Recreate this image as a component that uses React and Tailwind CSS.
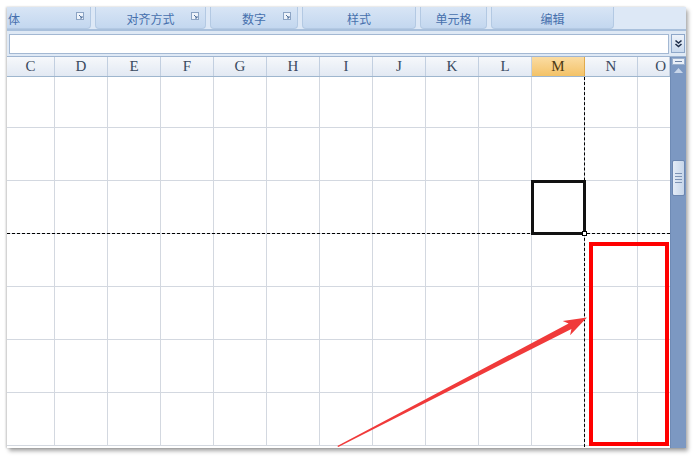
import React from "react"

const cols = ["C", "D", "E", "F", "G", "H", "I", "J", "K", "L", "M", "N", "O"]
const widths = [48, 53, 53, 53, 53, 53, 53, 53, 53, 53, 53, 53, 32]
const rows = [51, 53, 53, 53, 53, 53, 53]

const tabs = [
  { label: "体", w: "w-[84px]", launcher: true, align: "justify-between pl-[1px]" },
  { label: "对齐方式", w: "w-[111px]", launcher: true, align: "justify-center" },
  { label: "数字", w: "w-[88px]", launcher: true, align: "justify-center" },
  { label: "样式", w: "w-[114px]", launcher: false, align: "justify-center" },
  { label: "单元格", w: "w-[67px]", launcher: false, align: "justify-center" },
  { label: "编辑", w: "w-[123px]", launcher: false, align: "justify-center" },
]

function Launcher() {
  return (
    <svg width="8" height="8" viewBox="0 0 8 8" className="absolute right-[6px] top-[5px]">
      <rect x="0.5" y="0.5" width="7" height="7" fill="#eef3fa" stroke="#8ca4c4" />
      <path d="M3 3 L6 6 M4 6 H6 V4" stroke="#50709c" strokeWidth="1" fill="none" />
    </svg>
  )
}

export default function App() {
  return (
    <div className="relative w-[694px] h-[457px] bg-white overflow-hidden" style={{ fontFamily: '"Noto Sans CJK SC", "Liberation Sans", sans-serif' }}>
      <div className="ml-[7px] mt-[7px] w-[679px] h-[441px] flex flex-col bg-[#dfe9f5] shadow-[2px_3px_4px_rgba(0,0,0,0.35),-1px_0_2px_rgba(0,0,0,0.2)]">
        {/* ribbon group labels */}
        <div className="flex h-[24px] gap-[4px] bg-[#dde8f6] border-b-[2px] border-[#a9c0dc]">
          {tabs.map((t, i) => (
            <div
              key={i}
              className={`relative ${t.w} h-full flex items-center ${t.align} text-[12px] text-[#4670ad] bg-gradient-to-b from-[#d8e5f5] to-[#c3d7ef] border-x border-b border-[#b3c9e3] rounded-b-[4px] ${i === 0 ? "border-l-0 rounded-bl-none" : ""}`}
            >
              <span className="leading-none mt-[2px]">{t.label}</span>
              {t.launcher && <Launcher />}
            </div>
          ))}
          <div className="flex-1 h-full bg-[#dde8f6]" />
        </div>

        {/* formula bar */}
        <div className="flex items-center h-[26px] bg-[#dfe9f5] border-b border-[#9fb5d1]">
          <div className="ml-[2px] w-[660px] h-[20px] bg-white border border-[#a3b8d3]" />
          <div className="ml-[2px] w-[14px] h-[19px] flex items-center justify-center bg-gradient-to-b from-[#eef3fa] to-[#c9d9ee] border border-[#8ea7c9]">
            <svg width="9" height="9" viewBox="0 0 9 9">
              <path d="M1.5 1.5 L4.5 4 L7.5 1.5 M1.5 5 L4.5 7.5 L7.5 5" stroke="#1e2e4a" strokeWidth="1.6" fill="none" />
            </svg>
          </div>
        </div>

        {/* sheet */}
        <div className="flex flex-1 bg-white">
          <div className="w-[663px] flex flex-col">
            <div className="flex h-[20px] border-b border-[#9eb6ce]">
              {cols.map((c, i) => (
                <div
                  key={c}
                  style={{ width: widths[i] }}
                  className={`h-full flex items-center ${i === cols.length - 1 ? "justify-end pr-[3px]" : "justify-center"} text-[15px] leading-none border-r ${
                    c === "M"
                      ? "bg-gradient-to-b from-[#fbdca2] to-[#f3c266] text-[#4d3a12] border-[#e0aa4c]"
                      : "bg-gradient-to-b from-[#f6f8fb] to-[#e2e9f3] text-[#3a4a60] border-[#c2cfe0]"
                  }`}
                >
                  <span style={{ fontFamily: '"Liberation Serif", serif' }}>{c}</span>
                </div>
              ))}
            </div>
            {rows.map((h, r) => (
              <div key={r} className="flex" style={{ height: h }}>
                {cols.map((c, i) => (
                  <div
                    key={c}
                    style={{ width: widths[i] }}
                    className={`h-full border-b border-[#d3d8e0] ${i === cols.length - 1 ? "" : "border-r"}`}
                  />
                ))}
              </div>
            ))}
          </div>

          {/* vertical scrollbar */}
          <div className="w-[16px] flex flex-col bg-[#7c98c2] border-l border-[#6f8bb5]">
            <div className="h-[7px] mx-[1px] mt-[1px] bg-[#e9eff8] border border-[#9bb0cd] flex items-center justify-center">
              <div className="w-[7px] h-[1px] bg-[#6d83a6]" />
            </div>
            <div className="h-[10px] flex items-center justify-center">
              <svg width="9" height="5" viewBox="0 0 9 5">
                <path d="M0 5 L4.5 0 L9 5 Z" fill="#c8d6ea" />
              </svg>
            </div>
            <div className="h-[85px]" />
            <div className="h-[36px] mx-[1px] bg-gradient-to-r from-[#e3ebf6] to-[#c7d6ea] border border-[#6b86b0] rounded-[2px] flex flex-col items-center justify-center gap-[2px]">
              <div className="w-[7px] h-[1px] bg-[#7d93b5]" />
              <div className="w-[7px] h-[1px] bg-[#7d93b5]" />
              <div className="w-[7px] h-[1px] bg-[#7d93b5]" />
              <div className="w-[7px] h-[1px] bg-[#7d93b5]" />
            </div>
            <div className="flex-1" />
          </div>
        </div>
      </div>

      {/* copy marquee (dashed lines) */}
      <div className="absolute left-[584px] top-[77px] h-[370px] border-l border-dashed border-black" />
      <div className="absolute left-[7px] top-[233px] w-[663px] border-t border-dashed border-black" />

      {/* active cell */}
      <div className="absolute left-[531px] top-[180px] w-[55px] h-[55px] border-[3px] border-[#111]" />
      <div className="absolute left-[582px] top-[231px] w-[5px] h-[5px] bg-white border border-black" />

      {/* red highlight box */}
      <div className="absolute left-[589px] top-[242px] w-[80px] h-[204px] border-[4px] border-[#ff0000]" />

      {/* arrow */}
      <svg className="absolute left-0 top-0" width="694" height="457" viewBox="0 0 694 457">
        <polygon
          points="338.3,447 571.4,329 570.1,335.2 587,317.5 562.7,321 568.6,323.6 337.3,446"
          fill="#f03a3a"
        />
      </svg>
    </div>
  )
}
